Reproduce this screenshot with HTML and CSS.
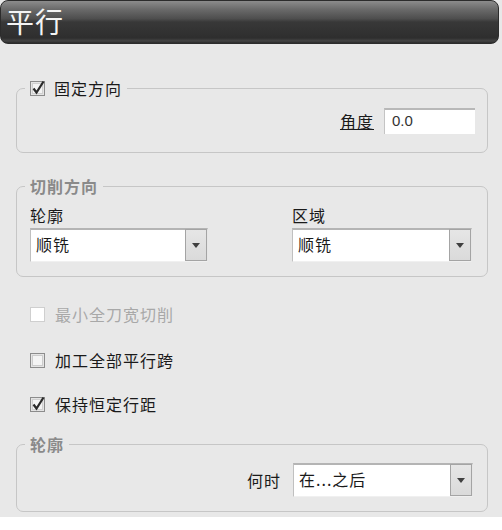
FILE: index.html
```html
<!DOCTYPE html>
<html lang="zh">
<head>
<meta charset="utf-8">
<link rel="stylesheet" href="styles.css">
</head>
<body>
<div class="panel">
  <div class="titlebar">平行</div>

  <fieldset class="group g1">
    <legend class="legend-check">
      <svg class="cb" width="16" height="16" viewBox="0 0 16 16"><rect x="0.5" y="1.5" width="14" height="14" fill="#e4e4e4" stroke="#8c8c8c"/><rect x="2.5" y="3.5" width="10" height="10" fill="#f4f4f4" stroke="#d0d0d0"/><path d="M3.5 8.5 L6.5 12.5 L13.5 1.5" fill="none" stroke="#2a2a2a" stroke-width="2.2"/></svg>
      <span>固定方向</span>
    </legend>
    <div class="angle-row">
      <span class="u">角度</span>
      <div class="input">0.0</div>
    </div>
  </fieldset>

  <fieldset class="group g2">
    <legend class="legend-gray">切削方向</legend>
    <div class="cols">
      <div class="col">
        <div class="lbl">轮廓</div>
        <div class="select"><span>顺铣</span><div class="btn"><i class="tri"></i></div></div>
      </div>
      <div class="col">
        <div class="lbl">区域</div>
        <div class="select"><span>顺铣</span><div class="btn"><i class="tri"></i></div></div>
      </div>
    </div>
  </fieldset>

  <div class="checks">
    <div class="crow disabled">
      <svg class="cb" width="16" height="16" viewBox="0 0 16 16"><rect x="0.5" y="1.5" width="14" height="14" fill="#ffffff" stroke="#cfcfcf"/></svg>
      <span>最小全刀宽切削</span>
    </div>
    <div class="crow r2">
      <svg class="cb" width="16" height="16" viewBox="0 0 16 16"><rect x="0.5" y="1.5" width="14" height="14" fill="#e4e4e4" stroke="#8c8c8c"/><rect x="2.5" y="3.5" width="10" height="10" fill="#f4f4f4" stroke="#cccccc"/></svg>
      <span>加工全部平行跨</span>
    </div>
    <div class="crow r3">
      <svg class="cb" width="16" height="16" viewBox="0 0 16 16"><rect x="0.5" y="1.5" width="14" height="14" fill="#e4e4e4" stroke="#8c8c8c"/><rect x="2.5" y="3.5" width="10" height="10" fill="#f4f4f4" stroke="#d0d0d0"/><path d="M3.5 8.5 L6.5 12.5 L13.5 1.5" fill="none" stroke="#2a2a2a" stroke-width="2.2"/></svg>
      <span>保持恒定行距</span>
    </div>
  </div>

  <fieldset class="group g3">
    <legend class="legend-gray">轮廓</legend>
    <div class="when-row">
      <span>何时</span>
      <div class="select wide"><span>在...之后</span><div class="btn"><i class="tri"></i></div></div>
    </div>
  </fieldset>
</div>
</body>
</html>
```

FILE: styles.css
```css
* { box-sizing: border-box; }
html, body { margin: 0; padding: 0; }
body {
  background: #ffffff;
  width: 502px;
  height: 530px;
  overflow: hidden;
  font-family: "Noto Sans CJK SC", "Noto Sans", sans-serif;
  font-size: 16px;
  color: #1a1a1a;
}
.panel {
  background: #e8e8e8;
  height: 517px;
  display: flex;
  flex-direction: column;
}
.titlebar {
  width: 499px;
  height: 44px;
  border: 1px solid #2c2c2c;
  border-radius: 8px;
  background: linear-gradient(#8c8c8c 0%, #6a6a6a 20%, #4e4e4e 42%, #383838 50%, #2e2e2e 88%, #444444 95%, #2a2a2a 100%);
  color: #f4f4f4;
  font-size: 28px;
  line-height: 40px;
  padding-left: 5px;
  letter-spacing: 1px;
  flex: none;
}
.group {
  margin: 0 14px 0 16px;
  border: 1px solid #c6c6c6;
  border-radius: 7px;
  padding: 0 15px 0 13px;
  min-width: 0;
  flex: none;
}
.group legend {
  margin-left: -5px;
  padding: 0 5px;
  height: 18px;
  line-height: 18px;
}
.legend-check {
  display: flex;
  align-items: center;
  gap: 8px;
  letter-spacing: 1px;
}
.legend-gray {
  color: #8a8a8a;
  font-weight: bold;
  letter-spacing: 1px;
}
.g1 { margin-top: 35px; padding-top: 11px; padding-bottom: 18px; padding-right: 12px; }
.angle-row {
  display: flex;
  justify-content: flex-end;
  align-items: center;
  gap: 10px;
}
.u { text-decoration: underline; letter-spacing: 1px; }
.input {
  width: 91px;
  height: 26px;
  background: #ffffff;
  border-top: 2px solid #b8b8b8;
  border-left: 1px solid #c4c4c4;
  font-family: "Liberation Sans", Arial, sans-serif;
  font-size: 15px;
  color: #333;
  line-height: 22px;
  padding-left: 7px;
}
.g2 { margin-top: 24px; padding-top: 10px; padding-bottom: 14px; }
.cols {
  display: grid;
  grid-template-columns: 178px 180px;
  column-gap: 84px;
}
.lbl { line-height: 20px; height: 20px; margin-bottom: 3px; letter-spacing: 1px; }
.select {
  height: 34px;
  background: #ffffff;
  border-top: 2px solid #b4b4b4;
  border-left: 1px solid #c0c0c0;
  border-right: 1px solid #e6e6e6;
  border-bottom: 1px solid #f0f0f0;
  display: flex;
  align-items: center;
  justify-content: space-between;
  padding: 0 0 0 5px;
}
.select span { line-height: 20px; letter-spacing: 1px; margin-top: -3px; }
.btn {
  width: 22px;
  height: 32px;
  align-self: flex-end;
  background: linear-gradient(#e6e6e6, #dadada);
  border: 1px solid #a4a4a4;
  display: flex;
  align-items: center;
  justify-content: center;
}
.tri {
  width: 0; height: 0;
  border-left: 4px solid transparent;
  border-right: 4px solid transparent;
  border-top: 5px solid #404040;
}
.checks {
  margin-left: 30px;
  margin-top: 27px;
  display: flex;
  flex-direction: column;
  flex: none;
}
.crow {
  display: flex;
  align-items: center;
  gap: 9px;
  height: 20px;
  line-height: 20px;
  letter-spacing: 1px;
}
.crow.disabled { color: #a8a8a8; }
.crow.r2 { margin-top: 26px; }
.crow.r3 { margin-top: 24px; }
.cb { flex: none; }
.g3 { margin-top: 21px; padding-top: 10px; padding-bottom: 14px; padding-right: 14px; }
.when-row {
  display: flex;
  justify-content: flex-end;
  align-items: center;
  gap: 12px;
}
.when-row > span { letter-spacing: 1px; }
.select.wide { width: 180px; }
```
